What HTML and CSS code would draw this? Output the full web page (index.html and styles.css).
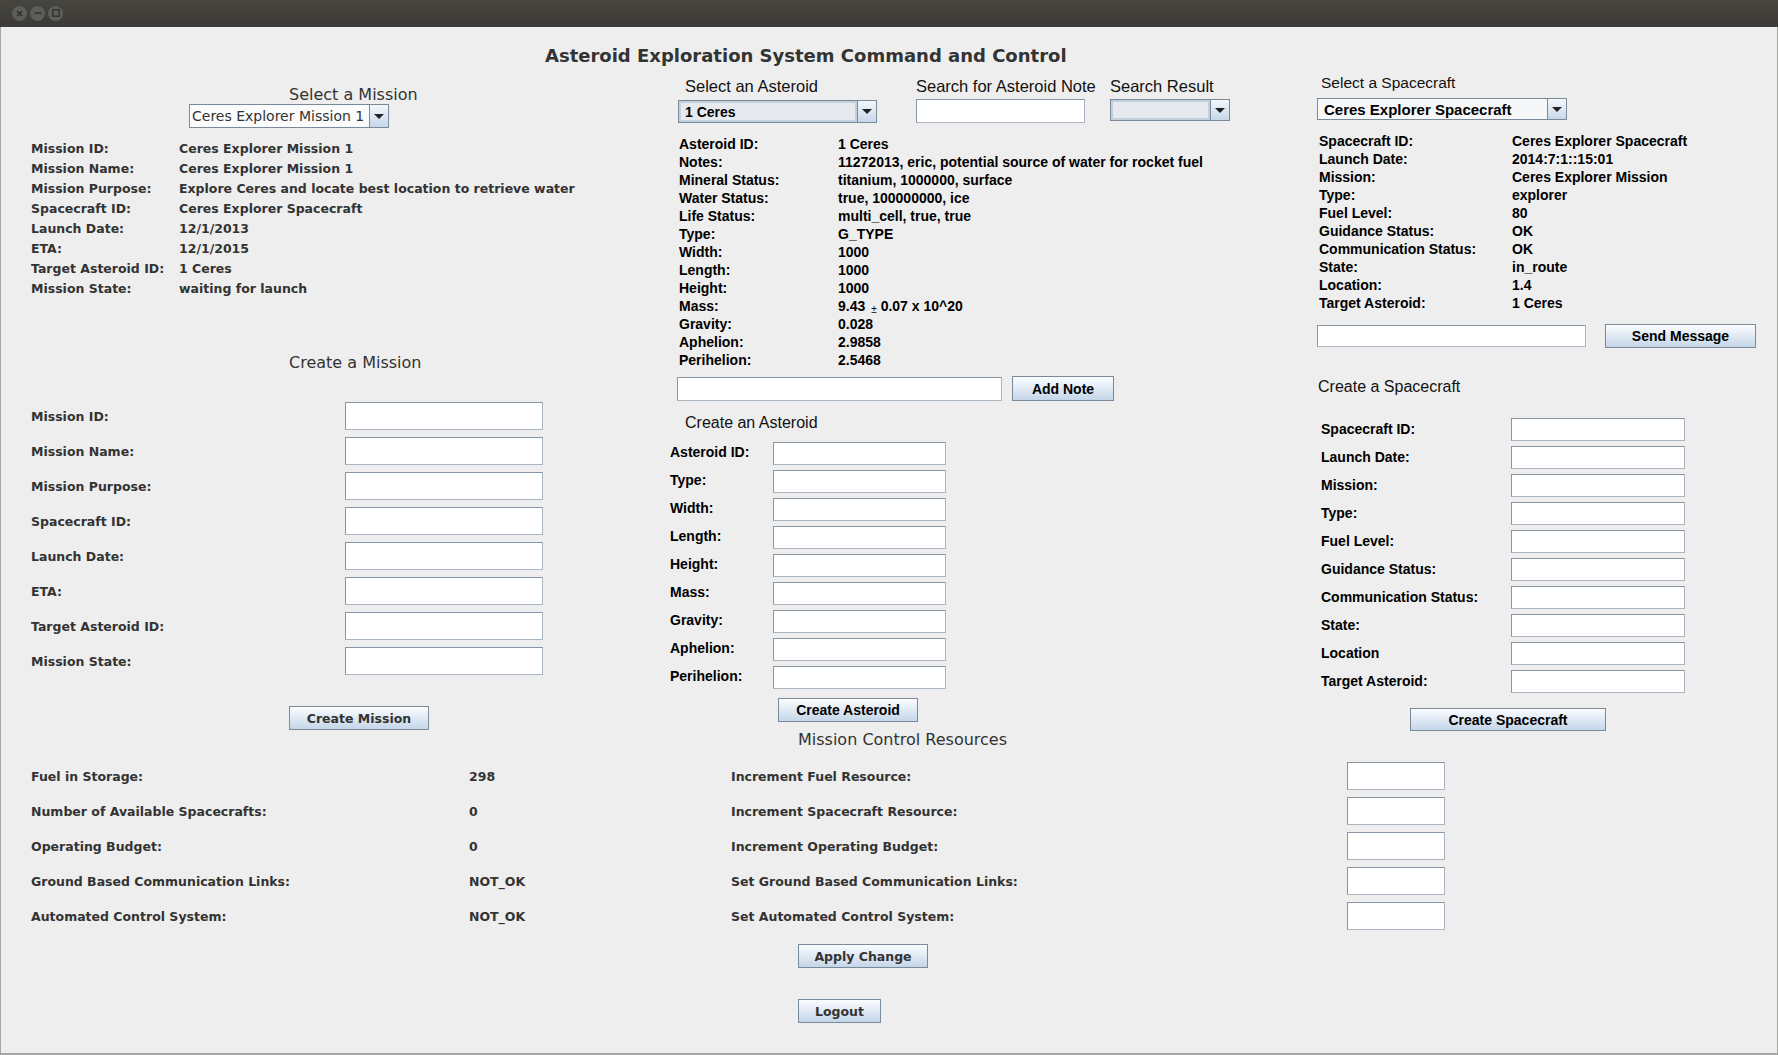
FILE: index.html
```html
<!DOCTYPE html>
<html lang="en">
<head>
<meta charset="utf-8">
<title>Asteroid Exploration System Command and Control</title>
<link rel="stylesheet" href="styles.css">
</head>
<body>
<div class="window">
  <header class="titlebar">
    <span class="wm"><svg width="7" height="7" viewBox="0 0 7 7"><path d="M1 1L6 6M6 1L1 6" stroke="#2e2d2a" stroke-width="1.6"/></svg></span>
    <span class="wm"><svg width="8" height="8" viewBox="0 0 8 8"><path d="M0.5 4H7.5" stroke="#2e2d2a" stroke-width="1.4"/></svg></span>
    <span class="wm"><svg width="8" height="8" viewBox="0 0 8 8"><rect x="0.8" y="0.8" width="6.4" height="6.4" fill="none" stroke="#2e2d2a" stroke-width="1.3"/></svg></span>
  </header>

  <main class="content">
    <h1 class="app-title">Asteroid Exploration System Command and Control</h1>

    <div class="top">
      <!-- Missions -->
      <section class="col col-mission">
        <div class="dj-heading m-sel-title">Select a Mission</div>
        <div class="combo combo-mission">
          <span class="combo-val">Ceres Explorer Mission 1</span>
          <span class="combo-arrow"><i class="tri"></i></span>
        </div>

        <dl class="info info-left">
          <dt>Mission ID:</dt><dd>Ceres Explorer Mission 1</dd>
          <dt>Mission Name:</dt><dd>Ceres Explorer Mission 1</dd>
          <dt>Mission Purpose:</dt><dd>Explore Ceres and locate best location to retrieve water</dd>
          <dt>Spacecraft ID:</dt><dd>Ceres Explorer Spacecraft</dd>
          <dt>Launch Date:</dt><dd>12/1/2013</dd>
          <dt>ETA:</dt><dd>12/1/2015</dd>
          <dt>Target Asteroid ID:</dt><dd>1 Ceres</dd>
          <dt>Mission State:</dt><dd>waiting for launch</dd>
        </dl>

        <div class="dj-heading m-create-title">Create a Mission</div>
        <div class="form form-left">
          <label>Mission ID:</label><span class="field"></span>
          <label>Mission Name:</label><span class="field"></span>
          <label>Mission Purpose:</label><span class="field"></span>
          <label>Spacecraft ID:</label><span class="field"></span>
          <label>Launch Date:</label><span class="field"></span>
          <label>ETA:</label><span class="field"></span>
          <label>Target Asteroid ID:</label><span class="field"></span>
          <label>Mission State:</label><span class="field"></span>
        </div>
        <button class="btn btn-dj btn-create-mission">Create Mission</button>
      </section>

      <!-- Asteroids -->
      <section class="col col-asteroid">
        <div class="ast-header">
          <div class="ast-group ast-group-a">
            <div class="ls-heading pad7">Select an Asteroid</div>
            <div class="combo combo-ast">
              <span class="combo-val tinted">1 Ceres</span>
              <span class="combo-arrow"><i class="tri"></i></span>
            </div>
          </div>
          <div class="ast-group ast-group-b">
            <div class="ls-heading">Search for Asteroid Note</div>
            <span class="field field-search"></span>
          </div>
          <div class="ast-group ast-group-c">
            <div class="ls-heading">Search Result</div>
            <div class="combo combo-result">
              <span class="combo-val tinted"></span>
              <span class="combo-arrow"><i class="tri"></i></span>
            </div>
          </div>
        </div>

        <dl class="info info-mid">
          <dt>Asteroid ID:</dt><dd>1 Ceres</dd>
          <dt>Notes:</dt><dd>11272013, eric, potential source of water for rocket fuel</dd>
          <dt>Mineral Status:</dt><dd>titanium, 1000000, surface</dd>
          <dt>Water Status:</dt><dd>true, 100000000, ice</dd>
          <dt>Life Status:</dt><dd>multi_cell, true, true</dd>
          <dt>Type:</dt><dd>G_TYPE</dd>
          <dt>Width:</dt><dd>1000</dd>
          <dt>Length:</dt><dd>1000</dd>
          <dt>Height:</dt><dd>1000</dd>
          <dt>Mass:</dt><dd>9.43 <span class="pm">±</span>0.07 x 10^20</dd>
          <dt>Gravity:</dt><dd>0.028</dd>
          <dt>Aphelion:</dt><dd>2.9858</dd>
          <dt>Perihelion:</dt><dd>2.5468</dd>
        </dl>

        <div class="note-row">
          <span class="field field-note"></span>
          <button class="btn btn-ls btn-note">Add Note</button>
        </div>

        <div class="ls-heading ast-create-title">Create an Asteroid</div>
        <div class="form form-mid">
          <label>Asteroid ID:</label><span class="field"></span>
          <label>Type:</label><span class="field"></span>
          <label>Width:</label><span class="field"></span>
          <label>Length:</label><span class="field"></span>
          <label>Height:</label><span class="field"></span>
          <label>Mass:</label><span class="field"></span>
          <label>Gravity:</label><span class="field"></span>
          <label>Aphelion:</label><span class="field"></span>
          <label>Perihelion:</label><span class="field"></span>
        </div>
        <button class="btn btn-ls btn-create-asteroid">Create Asteroid</button>
      </section>

      <!-- Spacecraft -->
      <section class="col col-craft">
        <div class="ls-heading craft-sel-title">Select a Spacecraft</div>
        <div class="combo combo-craft">
          <span class="combo-val craft-val">Ceres Explorer Spacecraft</span>
          <span class="combo-arrow"><i class="tri"></i></span>
        </div>

        <dl class="info info-right">
          <dt>Spacecraft ID:</dt><dd>Ceres Explorer Spacecraft</dd>
          <dt>Launch Date:</dt><dd>2014:7:1::15:01</dd>
          <dt>Mission:</dt><dd>Ceres Explorer Mission</dd>
          <dt>Type:</dt><dd>explorer</dd>
          <dt>Fuel Level:</dt><dd>80</dd>
          <dt>Guidance Status:</dt><dd>OK</dd>
          <dt>Communication Status:</dt><dd>OK</dd>
          <dt>State:</dt><dd>in_route</dd>
          <dt>Location:</dt><dd>1.4</dd>
          <dt>Target Asteroid:</dt><dd>1 Ceres</dd>
        </dl>

        <div class="send-row">
          <span class="field field-send"></span>
          <button class="btn btn-ls btn-send">Send Message</button>
        </div>

        <div class="ls-heading craft-create-title">Create a Spacecraft</div>
        <div class="form form-right">
          <label>Spacecraft ID:</label><span class="field"></span>
          <label>Launch Date:</label><span class="field"></span>
          <label>Mission:</label><span class="field"></span>
          <label>Type:</label><span class="field"></span>
          <label>Fuel Level:</label><span class="field"></span>
          <label>Guidance Status:</label><span class="field"></span>
          <label>Communication Status:</label><span class="field"></span>
          <label>State:</label><span class="field"></span>
          <label>Location</label><span class="field"></span>
          <label>Target Asteroid:</label><span class="field"></span>
        </div>
        <button class="btn btn-ls btn-create-craft">Create Spacecraft</button>
      </section>
    </div>

    <!-- Resources -->
    <section class="resources">
      <div class="dj-heading res-title">Mission Control Resources</div>
      <div class="res-grid">
        <span>Fuel in Storage:</span><span>298</span><span>Increment Fuel Resource:</span><span class="field"></span>
        <span>Number of Available Spacecrafts:</span><span>0</span><span>Increment Spacecraft Resource:</span><span class="field"></span>
        <span>Operating Budget:</span><span>0</span><span>Increment Operating Budget:</span><span class="field"></span>
        <span>Ground Based Communication Links:</span><span>NOT_OK</span><span>Set Ground Based Communication Links:</span><span class="field"></span>
        <span>Automated Control System:</span><span>NOT_OK</span><span>Set Automated Control System:</span><span class="field"></span>
      </div>
      <button class="btn btn-dj btn-apply">Apply Change</button>
      <button class="btn btn-dj btn-logout">Logout</button>
    </section>
  </main>
</div>
</body>
</html>
```

FILE: styles.css
```css
* { box-sizing: border-box; }

html, body {
  margin: 0;
  padding: 0;
}

body {
  width: 1778px;
  height: 1055px;
  overflow: hidden;
  background: #eeeeee;
}

.window {
  width: 1778px;
  height: 1055px;
  display: flex;
  flex-direction: column;
  background: #eeeeee;
  box-shadow: inset 1px 0 #a6a6a2, inset -1px 0 #a6a6a2, inset 0 -2px #a6a6a2;
}

/* ---------- title bar ---------- */
.titlebar {
  height: 27px;
  flex: none;
  display: flex;
  align-items: center;
  gap: 3px;
  padding: 0 0 1px 12px;
  background: linear-gradient(#46453f, #3b3a36);
}

.wm {
  width: 15px;
  height: 15px;
  border-radius: 50%;
  background: #5e5d59;
  display: flex;
  align-items: center;
  justify-content: center;
}

/* ---------- content ---------- */
.content {
  flex: 1;
  display: flex;
  flex-direction: column;
  align-items: flex-start;
}

.app-title {
  margin: 19px 0 0 545px;
  font: bold 18px/20px "DejaVu Sans", sans-serif;
  color: #333333;
  white-space: nowrap;
}

.top {
  display: grid;
  grid-template-columns: 640px 610px 528px;
  align-items: start;
}

.col {
  display: flex;
  flex-direction: column;
  align-items: flex-start;
}

.dj-heading {
  font: 16px/18px "DejaVu Sans", sans-serif;
  color: #333333;
  white-space: nowrap;
}

.ls-heading {
  font: 16px/20px "Liberation Sans", Arial, sans-serif;
  color: #111111;
  white-space: nowrap;
}

/* ---------- combo boxes ---------- */
.combo {
  display: flex;
  border: 1px solid #7a8a99;
  background: #ffffff;
}

.combo-val {
  flex: 1;
  display: flex;
  align-items: center;
  white-space: nowrap;
  overflow: hidden;
}

.combo-val.tinted {
  background: #e6eaef;
  box-shadow: inset 0 0 0 2px #c3d1df;
}

.combo-arrow {
  width: 19px;
  flex: none;
  border-left: 1px solid #7a8a99;
  background: linear-gradient(#f4f8fc, #c6d7e9);
  display: flex;
  align-items: center;
  justify-content: center;
}

.tri {
  width: 0;
  height: 0;
  border-left: 5px solid transparent;
  border-right: 5px solid transparent;
  border-top: 5px solid #222222;
}

/* ---------- fields & buttons ---------- */
.field {
  display: block;
  width: 100%;
  height: 100%;
  background: #ffffff;
  border: 1px solid #8795a4;
  border-right-color: #a9b5c1;
  border-bottom-color: #a9b5c1;
}

.btn {
  display: flex;
  align-items: center;
  justify-content: center;
  padding: 0;
  border: 1px solid #7a8a99;
  background: linear-gradient(#fbfdfe, #e2ebf5 45%, #c4d6e9);
  white-space: nowrap;
}

.btn-dj {
  font: bold 12.5px "DejaVu Sans", sans-serif;
  color: #333333;
}

.btn-ls {
  font: bold 14px "Liberation Sans", Arial, sans-serif;
  color: #000000;
}

/* ---------- info lists ---------- */
.info {
  display: grid;
  align-items: center;
  margin-bottom: 0;
}

.info dt,
.info dd {
  margin: 0;
  white-space: nowrap;
}

.form {
  display: grid;
  align-items: center;
}

.form label {
  white-space: nowrap;
}

/* ---------- mission column ---------- */
.m-sel-title { margin: 20px 0 0 289px; }

.combo-mission {
  margin-left: 189px;
  width: 200px;
  height: 24px;
}

.combo-mission .combo-val {
  padding-left: 2px;
  font: 14px "DejaVu Sans", sans-serif;
  color: #333333;
  background: #fcfcfd;
}

.info-left {
  margin: 10px 0 0 31px;
  grid-template-columns: 148px auto;
  grid-auto-rows: 20px;
  font: bold 12.5px "DejaVu Sans", sans-serif;
  color: #333333;
}

.m-create-title { margin: 56px 0 0 289px; }

.form-left {
  margin: 30px 0 0 31px;
  grid-template-columns: 314px 198px;
  grid-auto-rows: 28px;
  row-gap: 7px;
  font: bold 12.5px "DejaVu Sans", sans-serif;
  color: #333333;
}

.btn-create-mission {
  margin: 31px 0 0 289px;
  width: 140px;
  height: 24px;
}

/* ---------- asteroid column ---------- */
.ast-header {
  display: flex;
  align-items: flex-start;
  margin-top: 10px;
}

.ast-group .ls-heading { font-size: 16.5px; }

.pad7 { padding-left: 7px; }

.ast-group-a { margin-left: 38px; width: 199px; }
.ast-group-b { margin-left: 39px; width: 169px; }
.ast-group-c { margin-left: 25px; width: 120px; }

.combo-ast {
  margin-top: 4px;
  height: 23px;
}

.combo-ast .combo-val {
  padding-left: 6px;
  font: bold 14px "Liberation Sans", Arial, sans-serif;
  color: #000000;
}

.field-search {
  margin-top: 3px;
  height: 24px;
}

.combo-result {
  margin-top: 3px;
  height: 22px;
}

.info-mid {
  margin: 12px 0 0 39px;
  grid-template-columns: 159px auto;
  grid-auto-rows: 18px;
  font: bold 14px "Liberation Sans", Arial, sans-serif;
  color: #000000;
}

.pm {
  display: inline-block;
  font-size: 10px;
  font-weight: normal;
  line-height: 10px;
  vertical-align: -2px;
  margin: 0 4px 0 2px;
}

.note-row {
  display: flex;
  align-items: center;
  gap: 10px;
  margin: 7px 0 0 37px;
}

.field-note { width: 325px; height: 24px; }

.btn-note { width: 102px; height: 25px; }

.ast-create-title { margin: 12px 0 0 45px; }

.form-mid {
  margin: 9px 0 0 30px;
  grid-template-columns: 103px 173px;
  grid-auto-rows: 23px;
  row-gap: 5px;
  font: bold 14px "Liberation Sans", Arial, sans-serif;
  color: #000000;
}

.form-mid label { margin-top: -3px; }

.btn-create-asteroid {
  margin: 9px 0 0 138px;
  width: 140px;
  height: 24px;
}

/* ---------- spacecraft column ---------- */
.craft-sel-title {
  margin: 8px 0 0 71px;
  font-size: 15.5px;
  line-height: 18px;
}

.combo-craft {
  margin: 6px 0 0 67px;
  width: 250px;
  height: 22px;
}

.craft-val {
  padding-left: 6px;
  font: bold 15px "Liberation Sans", Arial, sans-serif;
  color: #000000;
  background: #f6f7f9;
}

.info-right {
  margin: 12px 0 0 69px;
  grid-template-columns: 193px auto;
  grid-auto-rows: 18px;
  font: bold 14px "Liberation Sans", Arial, sans-serif;
  color: #000000;
}

.send-row {
  display: flex;
  align-items: center;
  gap: 19px;
  margin: 12px 0 0 67px;
}

.field-send { width: 269px; height: 22px; }

.btn-send { width: 151px; height: 24px; }

.craft-create-title {
  margin: 30px 0 0 68px;
  line-height: 18px;
}

.form-right {
  margin: 22px 0 0 71px;
  grid-template-columns: 190px 174px;
  grid-auto-rows: 23px;
  row-gap: 5px;
  font: bold 14px "Liberation Sans", Arial, sans-serif;
  color: #000000;
}

.form-right label { margin-top: -2px; }

.btn-create-craft {
  margin: 15px 0 0 160px;
  width: 196px;
  height: 23px;
}

/* ---------- resources ---------- */
.resources {
  display: flex;
  flex-direction: column;
  align-items: flex-start;
}

.res-title { margin-left: 798px; }

.res-grid {
  display: grid;
  grid-template-columns: 438px 262px 616px 98px;
  grid-auto-rows: 28px;
  row-gap: 7px;
  align-items: center;
  margin: 13px 0 0 31px;
  font: bold 12.5px "DejaVu Sans", sans-serif;
  color: #333333;
  white-space: nowrap;
}

.btn-apply {
  margin: 14px 0 0 798px;
  width: 130px;
  height: 24px;
}

.btn-logout {
  margin: 31px 0 0 798px;
  width: 83px;
  height: 24px;
}
```
